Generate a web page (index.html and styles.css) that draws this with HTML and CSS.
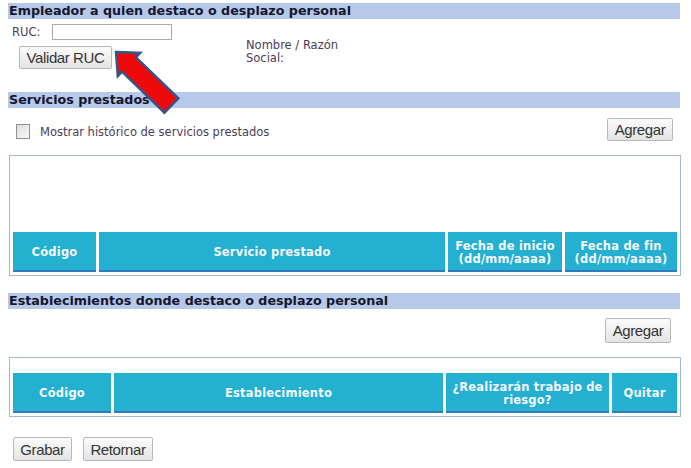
FILE: index.html
```html
<!DOCTYPE html>
<html>
<head>
<meta charset="utf-8">
<link rel="stylesheet" href="styles.css">
</head>
<body>

<div class="page">
    <h2 class="bar">Empleador a quien destaco o desplazo personal</h2>
    <div class="empleador">
        <div class="ruc-col">
            <div class="ruc-row">
                <label class="txt ruc-label" for="ruc">RUC:</label>
                <input type="text" id="ruc" class="ruc-input">
            </div>
            <button class="btn btn-validar">Validar RUC</button>
        </div>
        <div class="txt razon">Nombre / Razón<br>Social:</div>
    </div>

    <h2 class="bar">Servicios prestados</h2>
    <div class="toolbar">
        <label class="check"><span class="checkbox"></span><span class="txt check-text">Mostrar histórico de servicios prestados</span></label>
        <button class="btn btn-agregar">Agregar</button>
    </div>
    <div class="grid-box">
        <div class="grid-space grid-space-tall"></div>
        <table class="grid">
            <tr>
                <th class="w-cod1">Código</th>
                <th class="w-serv">Servicio prestado</th>
                <th class="w-fini">Fecha de inicio<br>(dd/mm/aaaa)</th>
                <th class="w-ffin">Fecha de fin<br>(dd/mm/aaaa)</th>
            </tr>
        </table>
    </div>

    <h2 class="bar bar-estab">Establecimientos donde destaco o desplazo personal</h2>
    <div class="toolbar toolbar-right">
        <button class="btn btn-agregar2">Agregar</button>
    </div>
    <div class="grid-box">
        <div class="grid-space grid-space-short"></div>
        <table class="grid">
            <tr>
                <th class="w-cod2">Código</th>
                <th class="w-estab">Establecimiento</th>
                <th class="w-riesgo">¿Realizarán trabajo de<br>riesgo?</th>
                <th class="w-quitar">Quitar</th>
            </tr>
        </table>
    </div>

    <div class="footer">
        <button class="btn btn-grabar">Grabar</button>
        <button class="btn btn-retornar">Retornar</button>
    </div>

    <!-- flecha que señala el botón Validar RUC -->
    <svg class="arrow" width="691" height="130" viewBox="0 0 691 130">
        <g transform="translate(116 52) rotate(44)">
            <polygon points="0,0 18,-16 18,-10 77,-10 77,10 18,10 18,16" fill="#ee0a0a" stroke="#34558a" stroke-width="2.5" stroke-linejoin="miter"/>
        </g>
    </svg>
</div>

</body>
</html>
```

FILE: styles.css
```css
body {
  margin: 0;
  background: #ffffff;
}

.page {
  position: relative;
  width: 672px;
  padding: 3px 0 0 8px;
  font-family: "DejaVu Sans", Verdana, sans-serif;
}

.bar {
  margin: 0;
  height: 16px;
  line-height: 16px;
  padding-left: 1px;
  background: #b6c9e8;
  color: #15152e;
  font-size: 12.7px;
  font-weight: bold;
}

.txt {
  font-size: 11.5px;
  color: #4a3d58;
}

/* Empleador */
.empleador {
  display: flex;
  height: 73px;
}

.ruc-col {
  width: 238px;
}

.ruc-row {
  display: flex;
  align-items: center;
  margin-top: 5px;
  height: 16px;
}

.ruc-label {
  width: 44px;
  padding-left: 4px;
  box-sizing: border-box;
}

.ruc-input {
  width: 120px;
  height: 16px;
  box-sizing: border-box;
  border: 1px solid #a9a9a9;
  padding: 0;
  margin: 0;
}

.razon {
  margin-top: 20px;
  line-height: 13px;
}

/* Botones */
.btn {
  box-sizing: border-box;
  height: 24px;
  padding: 0;
  margin: 0;
  border: 1px solid #b8b8b8;
  border-radius: 2px;
  background: linear-gradient(#fbfbfb, #e4e4e4);
  color: #333333;
  font-family: "Liberation Sans", Arial, sans-serif;
  font-size: 15px;
  letter-spacing: -0.4px;
}

.btn-validar {
  width: 93px;
  height: 23px;
  margin: 6px 0 0 11px;
}

.btn-agregar {
  width: 66px;
  height: 23px;
  margin: 10px 7px 0 0;
}

.btn-agregar2 {
  width: 66px;
  height: 25px;
  margin: 9px 9px 0 0;
}

/* Barra de opciones */
.toolbar {
  display: flex;
  justify-content: space-between;
  align-items: flex-start;
  height: 47px;
}

.toolbar-right {
  justify-content: flex-end;
  height: 48px;
}

.check {
  display: flex;
  align-items: center;
  margin: 15px 0 0 8px;
}

.checkbox {
  width: 14px;
  height: 15px;
  box-sizing: border-box;
  border: 1px solid #8f8f9a;
  background: linear-gradient(135deg, #dcdcdc, #fafafa);
}

.check-text {
  margin: 2px 0 0 10px;
}

/* Grillas */
.grid-box {
  margin-left: 1px;
  width: 670px;
  border: 1px solid #9bbbdc;
}

.grid-space-tall {
  height: 73px;
}

.grid-space-short {
  height: 12px;
}

.grid {
  border-collapse: separate;
  border-spacing: 3px;
  table-layout: fixed;
}

.grid th {
  box-sizing: border-box;
  height: 40px;
  padding: 3px 0 0 0;
  background: #24b0d1;
  border-bottom: 2px solid #3279c0;
  color: #f4f8ff;
  font-size: 11.5px;
  font-weight: bold;
  line-height: 13px;
  text-align: center;
  letter-spacing: 0.2px;
}

.w-cod1 { width: 83px; }
.w-serv { width: 346px; }
.w-fini { width: 114px; }
.w-ffin { width: 112px; }

.w-cod2 { width: 98px; }
.w-estab { width: 329px; }
.w-riesgo { width: 163px; }
.w-quitar { width: 65px; }

.bar-estab {
  margin-top: 17px;
}

/* Pie */
.footer {
  display: flex;
  margin: 20px 0 0 5px;
}

.btn-grabar {
  width: 59px;
}

.btn-retornar {
  width: 70px;
  margin-left: 11px;
}

.arrow {
  position: absolute;
  left: 0;
  top: 0;
  pointer-events: none;
}
```
